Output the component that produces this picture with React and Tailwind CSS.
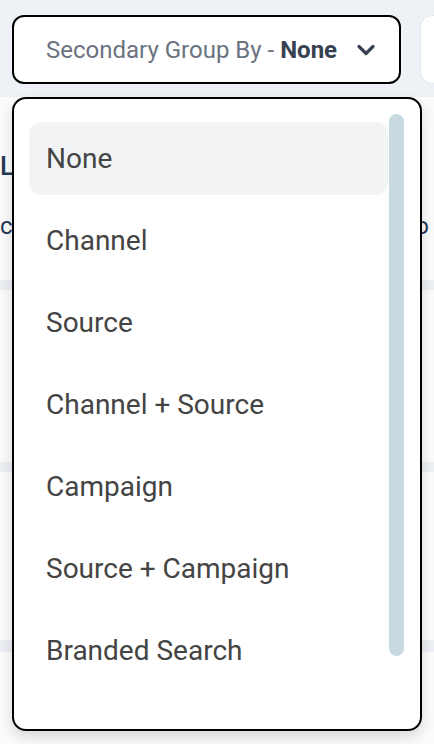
import React from "react";

const items = [
  "None",
  "Channel",
  "Source",
  "Channel + Source",
  "Campaign",
  "Source + Campaign",
  "Branded Search",
];

export default function App() {
  return (
    <div
      className="relative w-[434px] h-[744px] overflow-hidden bg-[#fbfbfc]"
      style={{ fontFamily: "Roboto, 'Noto Sans', sans-serif" }}
    >
      {/* top bar */}
      <div className="h-[97px] bg-[#eef1f5] flex items-start pt-[15px] pl-3 gap-[19px]">
        <button className="shrink-0 w-[389px] h-[69px] rounded-[12px] border-2 border-black bg-white flex items-center pl-[32px]">
          <span className="text-[24px] text-[#6b7280] whitespace-nowrap">
            Secondary Group By -{" "}
            <span className="font-bold text-[#374151]">None</span>
          </span>
          <svg
            className="ml-[19px]"
            width="20"
            height="14"
            viewBox="0 0 20 14"
            fill="none"
          >
            <path
              d="M3 3.5 L10 10.5 L17 3.5"
              stroke="#374151"
              strokeWidth="3.2"
              strokeLinecap="round"
              strokeLinejoin="round"
            />
          </svg>
        </button>
        <div className="shrink-0 w-[100px] h-[69px] rounded-[12px] border border-[#e2e5e9] bg-white" />
      </div>

      {/* background content */}
      <div className="relative">
        <div className="h-[85px] flex items-end pb-[3px]">
          <span className="text-[26px] font-medium text-[#253858] leading-none">
            L
          </span>
        </div>
        <div className="h-[88px] flex items-center justify-between pr-[5px]">
          <span className="text-[24px] text-[#253858] leading-none">c</span>
          <span className="text-[24px] text-[#253858] leading-none">o</span>
        </div>
        <div className="h-[10px]" />
        <div className="h-[10px] bg-[#eceff3]" />
        <div className="h-[172px]" />
        <div className="h-[10px] bg-[#eceff3]" />
        <div className="h-[168px]" />
        <div className="h-[12px] bg-[#eceff3]" />
      </div>

      {/* dropdown menu */}
      <div className="absolute left-[12px] top-[97px] w-[410px] h-[634px] rounded-[14px] border-2 border-black bg-white shadow-[0_6px_14px_rgba(0,0,0,0.14)] flex overflow-hidden">
        <ul className="w-[375px] shrink-0 pl-[15px] pt-[23px] flex flex-col gap-[9px]">
          {items.map((it, i) => (
            <li
              key={it}
              className={
                i === 0
                  ? "w-[359px] h-[73px] shrink-0 rounded-[12px] bg-[#f2f3f5] flex items-center pl-[17px] text-[28px] text-[#444444]"
                  : "w-[359px] h-[73px] shrink-0 rounded-[12px] flex items-center pl-[17px] text-[28px] text-[#444444]"
              }
            >
              {it}
            </li>
          ))}
        </ul>
        <div className="pt-[15px] shrink-0">
          <div className="w-[15px] h-[542px] rounded-full bg-[#c8d9e1]" />
        </div>
      </div>
    </div>
  );
}
